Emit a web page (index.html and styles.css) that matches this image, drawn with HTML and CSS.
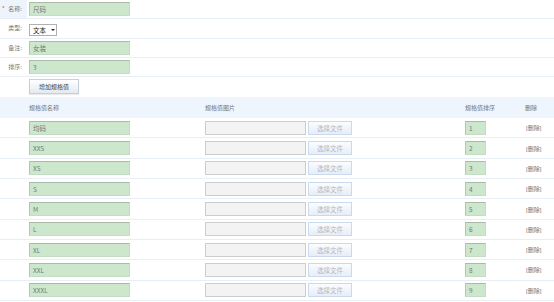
FILE: index.html
```html
<!DOCTYPE html>
<html>
<head>
    <meta charset="UTF-8">
    <title>规格编辑</title>
    <link rel="stylesheet" href="styles.css">
</head>
<body>

<div class="form">
    <div class="row row-on">
        <div class="label"><i class="req">*</i>名称:</div>
        <div class="field"><span class="txt">尺码</span></div>
    </div>
    <div class="row">
        <div class="label">类型:</div>
        <div class="field"><span class="sel">文本<b class="arr"></b></span></div>
    </div>
    <div class="row">
        <div class="label">备注:</div>
        <div class="field"><span class="txt">女装</span></div>
    </div>
    <div class="row">
        <div class="label">排序:</div>
        <div class="field"><span class="txt">3</span></div>
    </div>
    <div class="row row-btn">
        <div class="label"></div>
        <div class="field"><span class="btn-add">增加规格值</span></div>
    </div>
</div>

<div class="spec">
    <div class="spec-row spec-head">
        <div class="c-name">规格值名称</div>
        <div class="c-img">规格值图片</div>
        <div class="c-sort">规格值排序</div>
        <div class="c-del">删除</div>
    </div>
    <div class="spec-row">
        <div class="c-name"><span class="txt">均码</span></div>
        <div class="c-img"><span class="file"></span><span class="btn-file">选择文件</span></div>
        <div class="c-sort"><span class="num">1</span></div>
        <div class="c-del">[删除]</div>
    </div>
    <div class="spec-row">
        <div class="c-name"><span class="txt">XXS</span></div>
        <div class="c-img"><span class="file"></span><span class="btn-file">选择文件</span></div>
        <div class="c-sort"><span class="num">2</span></div>
        <div class="c-del">[删除]</div>
    </div>
    <div class="spec-row">
        <div class="c-name"><span class="txt">XS</span></div>
        <div class="c-img"><span class="file"></span><span class="btn-file">选择文件</span></div>
        <div class="c-sort"><span class="num">3</span></div>
        <div class="c-del">[删除]</div>
    </div>
    <div class="spec-row">
        <div class="c-name"><span class="txt">S</span></div>
        <div class="c-img"><span class="file"></span><span class="btn-file">选择文件</span></div>
        <div class="c-sort"><span class="num">4</span></div>
        <div class="c-del">[删除]</div>
    </div>
    <div class="spec-row">
        <div class="c-name"><span class="txt">M</span></div>
        <div class="c-img"><span class="file"></span><span class="btn-file">选择文件</span></div>
        <div class="c-sort"><span class="num">5</span></div>
        <div class="c-del">[删除]</div>
    </div>
    <div class="spec-row">
        <div class="c-name"><span class="txt">L</span></div>
        <div class="c-img"><span class="file"></span><span class="btn-file">选择文件</span></div>
        <div class="c-sort"><span class="num">6</span></div>
        <div class="c-del">[删除]</div>
    </div>
    <div class="spec-row">
        <div class="c-name"><span class="txt">XL</span></div>
        <div class="c-img"><span class="file"></span><span class="btn-file">选择文件</span></div>
        <div class="c-sort"><span class="num">7</span></div>
        <div class="c-del">[删除]</div>
    </div>
    <div class="spec-row">
        <div class="c-name"><span class="txt">XXL</span></div>
        <div class="c-img"><span class="file"></span><span class="btn-file">选择文件</span></div>
        <div class="c-sort"><span class="num">8</span></div>
        <div class="c-del">[删除]</div>
    </div>
    <div class="spec-row">
        <div class="c-name"><span class="txt">XXXL</span></div>
        <div class="c-img"><span class="file"></span><span class="btn-file">选择文件</span></div>
        <div class="c-sort"><span class="num">9</span></div>
        <div class="c-del">[删除]</div>
    </div>
</div>

</body>
</html>
```

FILE: styles.css
```css
* {
    margin: 0;
    padding: 0;
    box-sizing: border-box;
}
html {
    overflow: hidden;
}
body {
    background: #fff;
    font-family: "Noto Sans CJK SC", "Liberation Sans", sans-serif;
    font-size: 6px;
    color: #666;
}
.row {
    display: flex;
    height: 19.3px;
    border-bottom: 1px solid #e8eef5;
}
.row-btn {
    height: 20px;
    border-bottom: 0;
    align-items: flex-start;
}
.label {
    width: 27px;
    padding-right: 5px;
    text-align: right;
    line-height: 18px;
    color: #777;
    position: relative;
}
.row-on .label {
    background: #eef4fc;
}
.req {
    position: absolute;
    left: 2px;
    top: 0;
    font-style: normal;
    color: #e05050;
}
.field {
    padding-left: 2px;
    display: flex;
    align-items: center;
}
.row-btn .field {
    padding-top: 2px;
}
.txt, .num {
    display: block;
    height: 14px;
    line-height: 13px;
    padding-left: 3px;
    background: #cce7cb;
    border: 1px solid #c4dcc3;
    border-top-color: #a9bba8;
    border-left-color: #b3c7b2;
    color: #777;
    font-size: 6.5px;
}
.txt {
    width: 101px;
}
.num {
    width: 21px;
}
.sel {
    display: flex;
    align-items: center;
    width: 28px;
    height: 12px;
    padding-left: 3px;
    border: 1px solid #b0b0b0;
    background: #fff;
    color: #222;
    font-size: 6.5px;
    margin-top: 3px;
}
.arr {
    margin-left: 5px;
    border-left: 2px solid transparent;
    border-right: 2px solid transparent;
    border-top: 2.5px solid #222;
}
.btn-add {
    display: block;
    width: 50px;
    height: 15px;
    line-height: 13px;
    text-align: center;
    color: #444;
    border: 1px solid #c6d0dc;
    background: linear-gradient(#fff, #e4eaf1);
    box-shadow: 0 1px 1px rgba(0,0,0,.08);
}
.spec-row {
    display: grid;
    grid-template-columns: 205px 260px 60px 1fr;
    height: 20.3px;
    border-bottom: 1px solid #e8eef5;
    align-items: center;
}
.spec-head {
    height: 21px;
    background: #eef5fd;
    border-bottom: 0;
    color: #777;
}
.c-name {
    padding-left: 29px;
}
.c-img {
    display: flex;
    align-items: center;
}
.c-del {
    padding-left: 1px;
    color: #777;
    font-family: "Liberation Sans", "Noto Sans CJK SC", sans-serif;
    white-space: nowrap;
}
.spec-head .c-del {
    padding-left: 0;
}
.file {
    display: block;
    width: 101px;
    height: 14px;
    background: #f3f3f3;
    border: 1px solid #cdcdcd;
}
.btn-file {
    display: block;
    width: 44px;
    height: 14px;
    margin-left: 2px;
    line-height: 12px;
    text-align: center;
    color: #b8b8b8;
    font-size: 6.5px;
    border: 1px solid #cbd9ec;
    background: linear-gradient(#fbfcfe, #e6eef9);
}
```
